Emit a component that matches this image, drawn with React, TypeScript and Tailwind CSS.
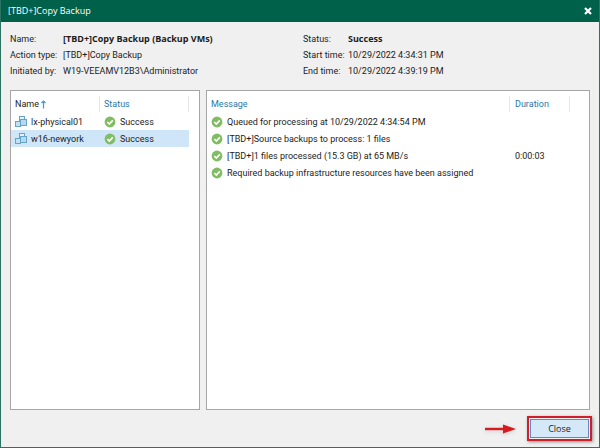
import React from "react";

const machines = [
  { name: "lx-physical01", status: "Success", selected: false },
  { name: "w16-newyork", status: "Success", selected: true },
];

const messages = [
  { text: "Queued for processing at 10/29/2022 4:34:54 PM", duration: "" },
  { text: "[TBD+]Source backups to process: 1 files", duration: "" },
  { text: "[TBD+]1 files processed (15.3 GB) at 65 MB/s", duration: "0:00:03" },
  { text: "Required backup infrastructure resources have been assigned", duration: "" },
];

function SuccessIcon() {
  return (
    <svg className="size-3 shrink-0" viewBox="0 0 12 12" aria-hidden="true">
      <circle cx="6" cy="6" r="5.4" fill="#80bd62" />
      <path d="M3.3 6 5.3 8 8.8 4.4" fill="none" stroke="#fff" strokeWidth="1.7" />
    </svg>
  );
}

function MachineIcon() {
  return (
    <svg className="h-3 w-[13px] shrink-0" viewBox="0 0 13 12" aria-hidden="true">
      <g stroke="#66a5c9" strokeWidth="1">
        <rect x="4.5" y="0.5" width="5" height="6" fill="#e3f2fb" />
        <rect x="0.5" y="5.5" width="5" height="5" fill="#c3e1f3" />
        <rect x="5.5" y="3.5" width="6" height="6" fill="#b5d9ef" />
      </g>
    </svg>
  );
}

function SortArrow() {
  return (
    <svg className="h-[9px] w-[5px]" viewBox="0 0 5 9" aria-hidden="true">
      <path d="M2.5 8.5V1M0.5 3 2.5 1 4.5 3" fill="none" stroke="#4a97c6" strokeWidth="1.2" />
    </svg>
  );
}

function Details({ rows, columns }: { rows: [string, string][]; columns: string }) {
  return (
    <dl className={`grid ${columns} content-start leading-4`}>
      {rows.map(([label, value], i) => (
        <React.Fragment key={label}>
          <dt>{label}</dt>
          <dd className={i === 0 ? "font-['Open_Sans',sans-serif] font-bold" : ""}>{value}</dd>
        </React.Fragment>
      ))}
    </dl>
  );
}

export default function App() {
  return (
    <main className="flex min-h-screen flex-col border border-t-0 border-[#2c7461] bg-[#f0f0f0] font-['Roboto','Open_Sans',sans-serif] text-[9px] text-[#1c1c1c]">
      <header className="flex h-[22px] items-center justify-between bg-[#00614b] pr-1.5 pl-[7px] font-['Open_Sans',sans-serif] text-white">
        <h1>[TBD+]Copy Backup</h1>
        <button type="button" aria-label="Close window" className="p-px">
          <svg className="size-2" viewBox="0 0 8 8" aria-hidden="true">
            <path d="M1 1 7 7M7 1 1 7" stroke="#fff" strokeWidth="2.2" />
          </svg>
        </button>
      </header>

      <section className="flex px-[9px] pt-[9px] pb-[11px]">
        <div className="w-[293px]">
          <Details
            columns="grid-cols-[53px_1fr]"
            rows={[
              ["Name:", "[TBD+]Copy Backup (Backup VMs)"],
              ["Action type:", "[TBD+]Copy Backup"],
              ["Initiated by:", "W19-VEEAMV12B3\\Administrator"],
            ]}
          />
        </div>
        <Details
          columns="grid-cols-[45px_1fr]"
          rows={[
            ["Status:", "Success"],
            ["Start time:", "10/29/2022 4:34:31 PM"],
            ["End time:", "10/29/2022 4:39:19 PM"],
          ]}
        />
      </section>

      <div className="flex flex-1 gap-1.5 px-[9px]">
        <section className="w-[190px] border border-[#a6a6a6] bg-white pr-2.5">
          <table className="w-full table-fixed text-left leading-4">
            <thead>
              <tr className="h-[22px] text-[#2a78a8]">
                <th className="w-[89px] px-0 pt-1 pb-0 font-normal">
                  <div className="flex h-4 items-center gap-0.5 border-r border-[#e6e6e6] pl-1 text-[#1c1c1c]">
                    Name
                    <SortArrow />
                  </div>
                </th>
                <th className="px-0 pt-1 pb-0 font-normal">
                  <div className="flex h-4 items-center border-r border-[#e6e6e6] pl-1">Status</div>
                </th>
              </tr>
            </thead>
            <tbody>
              {machines.map((m) => (
                <tr key={m.name} className={m.selected ? "h-[17px] bg-[#cfe6f8]" : "h-[17px]"}>
                  <td className="px-0 pt-px pb-0">
                    <div className="flex items-center gap-[3px] pl-1">
                      <MachineIcon />
                      {m.name}
                    </div>
                  </td>
                  <td className="px-0 pt-px pb-0">
                    <div className="flex items-center gap-1 pl-1">
                      <SuccessIcon />
                      {m.status}
                    </div>
                  </td>
                </tr>
              ))}
            </tbody>
          </table>
        </section>

        <section className="flex-1 border border-[#a6a6a6] bg-white pr-[19px]">
          <table className="w-full table-fixed text-left leading-4">
            <thead>
              <tr className="h-[22px] text-[#2a78a8]">
                <th className="px-0 pt-1 pb-0 font-normal">
                  <div className="flex h-4 items-center border-r border-[#e6e6e6] pl-1">Message</div>
                </th>
                <th className="w-[60px] px-0 pt-1 pb-0 font-normal">
                  <div className="flex h-4 items-center border-r border-[#e6e6e6] pl-[5px]">Duration</div>
                </th>
              </tr>
            </thead>
            <tbody>
              {messages.map((m) => (
                <tr key={m.text} className="h-[17px]">
                  <td className="px-0 pt-px pb-0">
                    <div className="flex items-center gap-1 pl-1 whitespace-nowrap">
                      <SuccessIcon />
                      {m.text}
                    </div>
                  </td>
                  <td className="pt-px pr-0 pb-0 pl-[5px]">{m.duration}</td>
                </tr>
              ))}
            </tbody>
          </table>
        </section>
      </div>

      <footer className="flex items-center justify-end gap-[9px] px-[7px] py-1.5">
        <svg className="h-3 w-[34px] drop-shadow-sm" viewBox="0 0 34 12" aria-hidden="true">
          <path d="M1 6H22" stroke="#d71920" strokeWidth="2.4" />
          <path d="M19 1.5 32 6 19 10.5Z" fill="#d71920" />
        </svg>
        <div className="border-2 border-[#cf1f2b] p-px shadow-[1px_1px_3px_#0006]">
          <button type="button" className="block h-[19px] w-[59px] border border-[#6a86c0] bg-[#d5e8f8] font-['Open_Sans',sans-serif]">
            Close
          </button>
        </div>
      </footer>
    </main>
  );
}
